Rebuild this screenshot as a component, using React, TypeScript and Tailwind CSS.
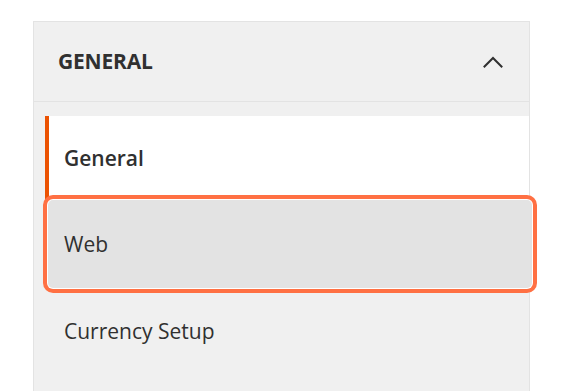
import React from "react";

export default function App() {
  return (
    <div
      className="w-[568px] h-[391px] bg-white overflow-hidden pt-[21px] pl-[33px]"
      style={{ fontFamily: '"Open Sans", "Noto Sans", sans-serif' }}
    >
      <div className="w-[497px] border border-[#e3e3e3] bg-[#f0f0f0] pb-[30px]">
        <div className="h-[80px] flex items-center justify-between pl-[24px] pr-[26px] border-b border-[#e3e3e3]">
          <span className="text-[21px] font-bold text-[#303030] tracking-[-0.2px]">GENERAL</span>
          <svg width="20" height="12" viewBox="0 0 20 12" className="text-[#303030]">
            <polyline
              points="1.5,10.5 10,2 18.5,10.5"
              fill="none"
              stroke="currentColor"
              strokeWidth="2"
              strokeLinecap="square"
            />
          </svg>
        </div>
        <div className="pt-[14px] pl-[11px]">
          <div className="h-[84px] bg-white border-l-4 border-[#eb5202] pl-[15px] flex items-center text-[21px] font-semibold text-[#303030]">
            <span className="mt-[1px]">General</span>
          </div>
          <div className="h-[88px] ml-[3px] -mr-[3px] rounded-[5px] bg-[#e3e3e3] shadow-[0_0_0_1px_#ffffff,0_0_0_5px_#ff7043] pl-[16px] flex items-center text-[21px] text-[#303030]">
            <span className="mt-[1px]">Web</span>
          </div>
          <div className="h-[86px] pl-[19px] flex items-center text-[21px] text-[#303030]">
            <span className="mt-[1px]">Currency Setup</span>
          </div>
        </div>
      </div>
    </div>
  );
}
